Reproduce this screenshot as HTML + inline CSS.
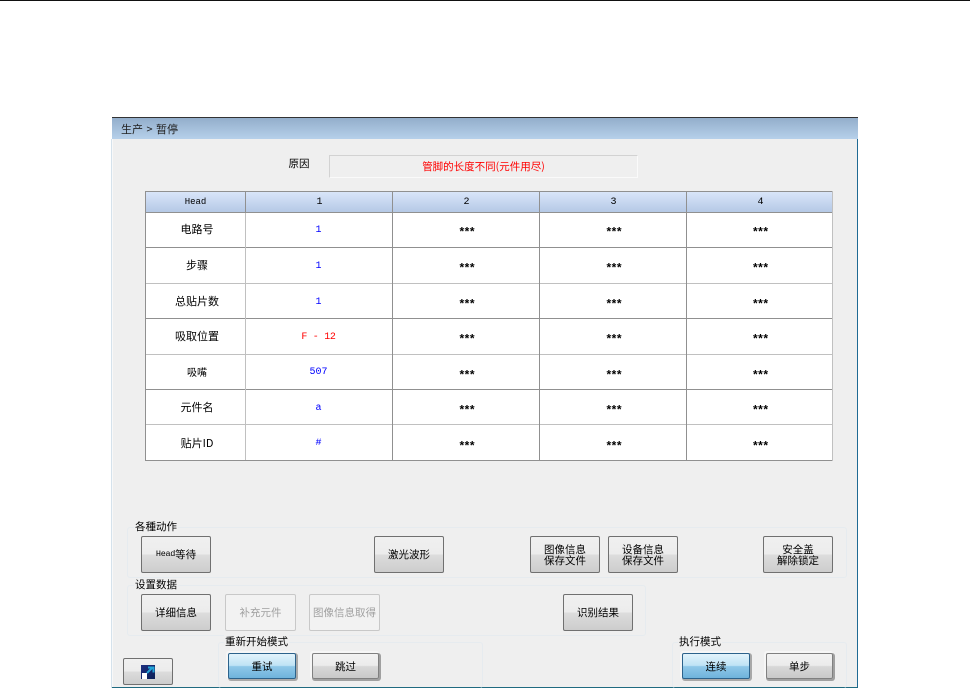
<!DOCTYPE html>
<html>
<head>
<meta charset="utf-8">
<style>
html,body{margin:0;padding:0;background:#fff;}
body{width:970px;height:688px;position:relative;overflow:hidden;font-family:"WenQuanYi Zen Hei","Noto Sans CJK SC","Liberation Sans",sans-serif;font-size:10.5px;color:#000;}
div{position:absolute;box-sizing:border-box;}
.c{display:flex;align-items:center;justify-content:center;text-align:center;white-space:nowrap;}
.m{font-family:"Liberation Mono","WenQuanYi Zen Hei",monospace;font-size:10px;}
.s{font-family:"Liberation Mono",monospace;font-weight:bold;font-size:12px;letter-spacing:-2px;padding-top:3px;}
.k{font-family:"Liberation Mono",monospace;font-size:8.5px;letter-spacing:-.3px;}
.btn{border:1px solid #707070;border-radius:2px;background:linear-gradient(#f0f0f0 0,#ececec 48%,#dcdcdc 52%,#cdcdcd 100%);line-height:11px;}
.dis{border-color:#c8c8c8;background:#f2f2f2;color:#a0a0a0;}
.blue{border:1px solid #2c628b;background:linear-gradient(#e2f3fb 0,#bfe3f5 48%,#8fc8e8 52%,#6fb3dc 100%);box-shadow:1px 1px 0 1px #a8a8a8,-1px -1px 0 1px #f6f6f6;}
.gr{border:1px solid #808080;background:linear-gradient(#f2f2f2 0,#ebebeb 48%,#d8d8d8 52%,#c9c9c9 100%);box-shadow:1px 1px 0 1px #a0a0a0,-1px -1px 0 1px #f6f6f6;}
.grp{border:1px solid #e6ebef;border-radius:3px;}
.lg{background:#efefef;padding:0 1px;line-height:13px;font-size:10.5px;white-space:nowrap;}
.h{background:#909090;}
.l{background:#c0c0c0;}
</style>
</head>
<body>
<div style="left:0;top:0;width:970px;height:1px;background:#111"></div>

<div style="left:112px;top:117px;width:746px;height:571px;background:#efefef"></div>
<div style="left:111px;top:139px;width:1px;height:549px;background:#d5e2ec"></div>
<div style="left:112px;top:139px;width:1px;height:549px;background:#f8f8f8"></div>
<div style="left:857px;top:139px;width:1px;height:549px;background:#1f6a94"></div>
<div style="left:112px;top:687px;width:746px;height:1px;background:#1f6a80"></div>
<div style="left:112px;top:117px;width:746px;height:1px;background:#333"></div>
<div style="left:112px;top:118px;width:746px;height:21px;background:linear-gradient(#93aecb,#b6d0ea)"></div>
<div style="left:121px;top:122px;height:14px;line-height:14px;color:#222;white-space:nowrap;font-size:11px;word-spacing:1px">生产 &gt; 暂停</div>

<div class="c" style="left:277px;top:156px;width:44px;height:14px">原因</div>
<div class="c" style="left:329px;top:155px;width:309px;height:23px;border:1px solid #d2d2d2;border-right-color:#fafafa;border-bottom-color:#fafafa;color:#f00;font-size:10.5px">管脚的长度不同(元件用尽)</div>

<!-- table -->
<div style="left:145px;top:191px;width:688px;height:270px;background:#fff"></div>
<div style="left:146px;top:192px;width:686px;height:20px;background:linear-gradient(#d9e5f9,#b5c9e6)"></div>
<div class="h" style="left:145px;top:191px;width:688px;height:1px"></div>
<div class="h" style="left:145px;top:212px;width:688px;height:1px"></div>
<div class="h" style="left:145px;top:247px;width:688px;height:1px"></div>
<div class="l" style="left:145px;top:283px;width:688px;height:1px"></div>
<div class="h" style="left:145px;top:318px;width:688px;height:1px"></div>
<div class="l" style="left:145px;top:354px;width:688px;height:1px"></div>
<div class="h" style="left:145px;top:389px;width:688px;height:1px"></div>
<div class="l" style="left:145px;top:424px;width:688px;height:1px"></div>
<div class="h" style="left:145px;top:460px;width:688px;height:1px"></div>
<div class="h" style="left:145px;top:191px;width:1px;height:270px"></div>
<div class="h" style="left:245px;top:191px;width:1px;height:21px"></div>
<div class="l" style="left:245px;top:213px;width:1px;height:247px"></div>
<div class="h" style="left:392px;top:191px;width:1px;height:270px"></div>
<div class="h" style="left:539px;top:191px;width:1px;height:270px"></div>
<div class="h" style="left:686px;top:191px;width:1px;height:270px"></div>
<div class="l" style="left:832px;top:191px;width:1px;height:270px"></div>

<div class="c m" style="left:146px;top:192px;width:99px;height:20px;font-size:9px">Head</div>
<div class="c m" style="left:246px;top:192px;width:147px;height:20px">1</div>
<div class="c m" style="left:393px;top:192px;width:147px;height:20px">2</div>
<div class="c m" style="left:540px;top:192px;width:147px;height:20px">3</div>
<div class="c m" style="left:687px;top:192px;width:147px;height:20px">4</div>

<div class="c" style="left:147px;top:222px;width:100px;height:14px;font-size:11px">电路号</div>
<div class="c" style="left:147px;top:258px;width:100px;height:14px;font-size:11px">步骤</div>
<div class="c" style="left:147px;top:294px;width:100px;height:14px;font-size:11px">总贴片数</div>
<div class="c" style="left:147px;top:329px;width:100px;height:14px;font-size:11px">吸取位置</div>
<div class="c" style="left:147px;top:364px;width:100px;height:14px;font-size:10px">吸嘴</div>
<div class="c" style="left:147px;top:400px;width:100px;height:14px;font-size:11px">元件名</div>
<div class="c" style="left:147px;top:436px;width:100px;height:14px;font-size:11px">贴片ID</div>

<div class="c m" style="left:246px;top:223px;width:145px;height:14px;color:#00f">1</div>
<div class="c m" style="left:246px;top:259px;width:145px;height:14px;color:#00f">1</div>
<div class="c m" style="left:246px;top:295px;width:145px;height:14px;color:#00f">1</div>
<div class="c m" style="left:246px;top:330px;width:145px;height:14px;color:#f00;letter-spacing:-.3px">F - 12</div>
<div class="c m" style="left:246px;top:365px;width:145px;height:14px;color:#00f">507</div>
<div class="c m" style="left:246px;top:401px;width:145px;height:14px;color:#00f">a</div>
<div class="c m" style="left:246px;top:436px;width:145px;height:14px;color:#00f">#</div>

<div class="c s" style="left:393px;top:224px;width:146px;height:14px">***</div>
<div class="c s" style="left:540px;top:224px;width:146px;height:14px">***</div>
<div class="c s" style="left:687px;top:224px;width:145px;height:14px">***</div>
<div class="c s" style="left:393px;top:260px;width:146px;height:14px">***</div>
<div class="c s" style="left:540px;top:260px;width:146px;height:14px">***</div>
<div class="c s" style="left:687px;top:260px;width:145px;height:14px">***</div>
<div class="c s" style="left:393px;top:296px;width:146px;height:14px">***</div>
<div class="c s" style="left:540px;top:296px;width:146px;height:14px">***</div>
<div class="c s" style="left:687px;top:296px;width:145px;height:14px">***</div>
<div class="c s" style="left:393px;top:331px;width:146px;height:14px">***</div>
<div class="c s" style="left:540px;top:331px;width:146px;height:14px">***</div>
<div class="c s" style="left:687px;top:331px;width:145px;height:14px">***</div>
<div class="c s" style="left:393px;top:367px;width:146px;height:14px">***</div>
<div class="c s" style="left:540px;top:367px;width:146px;height:14px">***</div>
<div class="c s" style="left:687px;top:367px;width:145px;height:14px">***</div>
<div class="c s" style="left:393px;top:402px;width:146px;height:14px">***</div>
<div class="c s" style="left:540px;top:402px;width:146px;height:14px">***</div>
<div class="c s" style="left:687px;top:402px;width:145px;height:14px">***</div>
<div class="c s" style="left:393px;top:438px;width:146px;height:14px">***</div>
<div class="c s" style="left:540px;top:438px;width:146px;height:14px">***</div>
<div class="c s" style="left:687px;top:438px;width:145px;height:14px">***</div>

<!-- groups -->
<div class="grp" style="left:127px;top:527px;width:720px;height:51px"></div>
<div class="lg" style="left:134px;top:520px">各種动作</div>
<div class="grp" style="left:127px;top:585px;width:519px;height:51px"></div>
<div class="lg" style="left:134px;top:578px">设置数据</div>
<div class="grp" style="left:218px;top:642px;width:265px;height:46px;border-bottom:0"></div>
<div class="lg" style="left:224px;top:635px">重新开始模式</div>
<div class="grp" style="left:672px;top:642px;width:175px;height:46px;border-bottom:0"></div>
<div class="lg" style="left:678px;top:635px">执行模式</div>

<!-- buttons -->
<div class="btn c" style="left:141px;top:536px;width:70px;height:37px"><span class="k">Head</span>等待</div>
<div class="btn c" style="left:374px;top:536px;width:70px;height:37px">激光波形</div>
<div class="btn c" style="left:530px;top:536px;width:70px;height:37px">图像信息<br>保存文件</div>
<div class="btn c" style="left:608px;top:536px;width:70px;height:37px">设备信息<br>保存文件</div>
<div class="btn c" style="left:763px;top:536px;width:70px;height:37px">安全盖<br>解除锁定</div>
<div class="btn c" style="left:141px;top:594px;width:70px;height:37px">详细信息</div>
<div class="btn dis c" style="left:225px;top:594px;width:71px;height:37px">补充元件</div>
<div class="btn dis c" style="left:309px;top:594px;width:71px;height:37px">图像信息取得</div>
<div class="btn c" style="left:563px;top:594px;width:70px;height:37px">识别结果</div>
<div class="blue c" style="left:228px;top:653px;width:68px;height:26px;border-radius:2px">重试</div>
<div class="gr c" style="left:312px;top:653px;width:67px;height:26px;border-radius:2px">跳过</div>
<div class="blue c" style="left:682px;top:653px;width:68px;height:26px;border-radius:2px">连续</div>
<div class="gr c" style="left:766px;top:653px;width:67px;height:26px;border-radius:2px">单步</div>

<div class="btn" style="left:123px;top:658px;width:50px;height:27px"></div>
<svg style="position:absolute;left:141px;top:665px" width="14" height="14" viewBox="0 0 14 14">
<defs><linearGradient id="g" x1="0" y1="0" x2="1" y2="1"><stop offset="0" stop-color="#1d2f80"/><stop offset="1" stop-color="#0b1f55"/></linearGradient></defs>
<rect width="14" height="14" fill="url(#g)"/>
<rect x="1" y="8" width="5" height="6" fill="#fff"/>
<path d="M6 8L11 3M7 2.5h5.5v5" stroke="#22a4d8" stroke-width="2" fill="none"/>
</svg>
</body>
</html>
